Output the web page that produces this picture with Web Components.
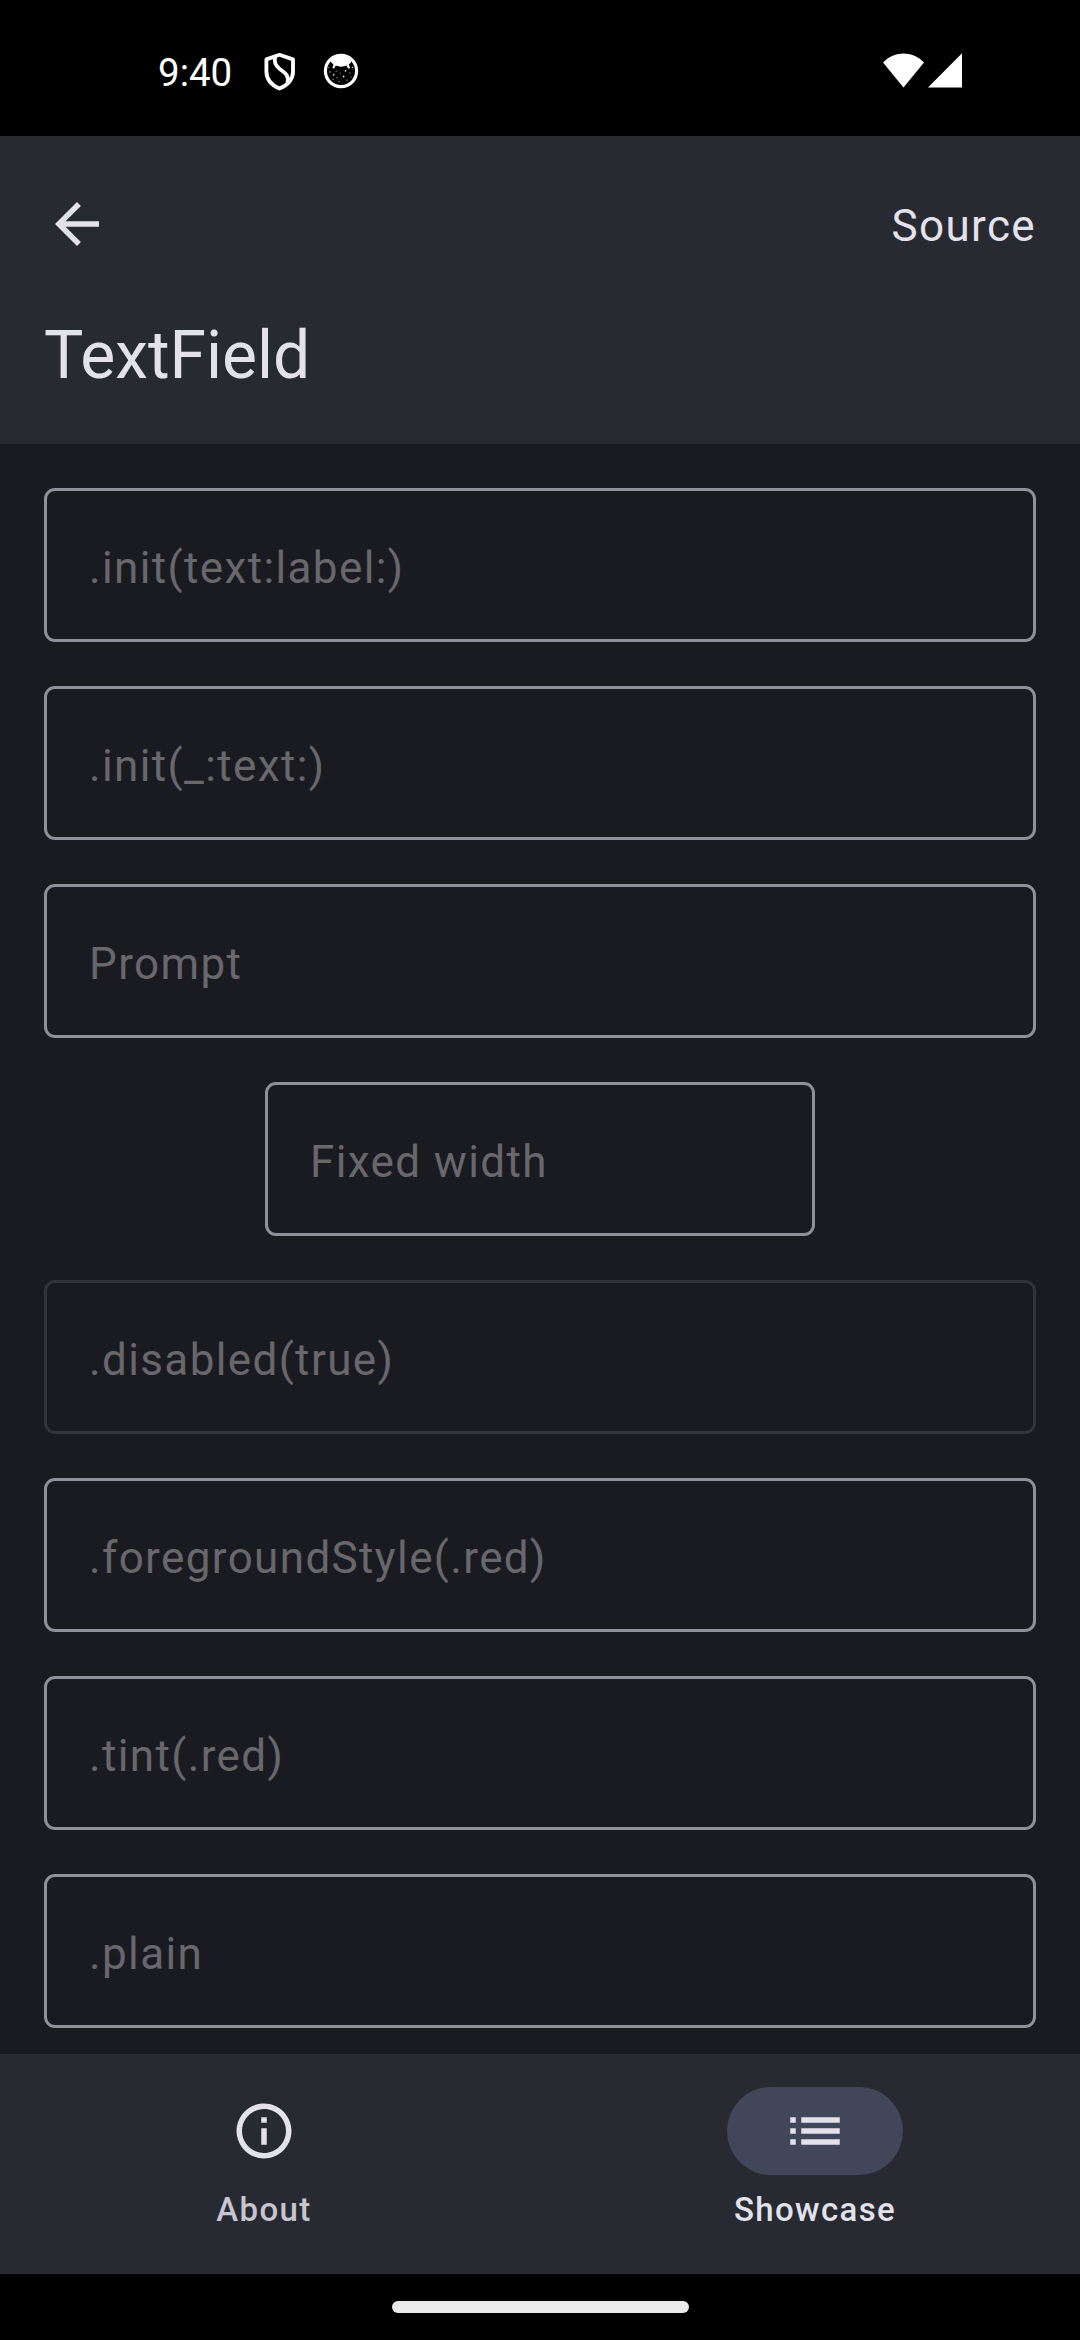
<!DOCTYPE html>
<html lang="en">
<head>
<meta charset="utf-8">
<title>TextField</title>
<style>
html,body{margin:0;padding:0;background:#000}
body{font-family:Roboto,"Noto Sans",sans-serif;width:1080px;height:2340px;overflow:hidden}
</style>
</head>
<body>
<app-screen>
  <status-bar slot="status">9:40</status-bar>
  <top-bar slot="header" action="Source">TextField</top-bar>
  <text-field>.init(text:label:)</text-field>
  <text-field>.init(_:text:)</text-field>
  <text-field>Prompt</text-field>
  <text-field fixed>Fixed width</text-field>
  <text-field disabled>.disabled(true)</text-field>
  <text-field>.foregroundStyle(.red)</text-field>
  <text-field>.tint(.red)</text-field>
  <text-field>.plain</text-field>
  <nav-bar slot="footer">
    <nav-item icon="info">About</nav-item>
    <nav-item icon="list" selected>Showcase</nav-item>
  </nav-bar>
  <home-indicator slot="footer"></home-indicator>
</app-screen>
<script>
const define = (name, html) => customElements.define(name, class extends HTMLElement {
  constructor() {
    super();
    const root = this.attachShadow({ mode: 'open' });
    root.innerHTML = typeof html === 'function' ? html(this) : html;
  }
});

define('app-screen', `
<style>
:host{display:flex;flex-direction:column;width:1080px;height:2340px;background:#1a1b20;overflow:hidden}
main{flex:1;min-height:0;box-sizing:border-box;padding:44px 44px 0;display:flex;flex-direction:column;align-items:center;gap:44px;overflow:hidden}
</style>
<slot name="status"></slot>
<slot name="header"></slot>
<main><slot></slot></main>
<slot name="footer"></slot>`);

define('status-bar', `
<style>
:host{display:flex;box-sizing:border-box;height:136px;flex:none;background:#000;color:#fff;padding:48px 118px 0 158px;align-items:flex-start;font-size:38.5px;line-height:48px}
span{padding-top:1px}
svg{display:block;flex:none}
.shield{margin:4px 0 0 32px}
.cat{margin:5px 0 0 27px}
.signal{margin:4px 0 0 auto}
</style>
<span><slot></slot></span>
<svg class="shield" width="32" height="40" viewBox="0 0 32 40" fill="none" stroke="#fff" stroke-width="3.8" stroke-linejoin="round">
  <path d="M15.5 2.8 29 7.4V19.5C29 27 24 33 15.5 36.6 7 33 2.4 27 2.4 19.5V7.4Z"/>
  <path d="M11.3 4.4C9.6 10 11.2 13.6 16 17.2 21.8 21.2 25 24 23.5 30.2"/>
</svg>
<svg class="cat" width="36" height="36" viewBox="0 0 36 36">
  <circle cx="18" cy="18" r="15.6" fill="none" stroke="#fff" stroke-width="3.2"/>
  <path fill="#fff" d="M8 6.5C14 1.8 22 1.8 28 6.5L28 9.4 25.8 11.5 27.2 15.2 25.2 15.4 23.4 12.6C20 14 16.2 14 12.8 12.6L11.2 15.4 9.4 15.2 10.5 11.6 8 9.3Z"/>
  <g fill="#ddd"><circle cx="5.8" cy="14.5" r=".5"/><circle cx="7" cy="19" r=".7"/><circle cx="10.6" cy="21.7" r=".9"/><circle cx="13.2" cy="18" r=".6"/><circle cx="14" cy="24.8" r=".5"/><circle cx="17.2" cy="20" r=".5"/><circle cx="16" cy="28.5" r=".5"/><circle cx="20.6" cy="23.5" r=".9"/><circle cx="22.5" cy="17.8" r=".9"/><circle cx="26.8" cy="20" r=".6"/><circle cx="24" cy="27" r=".6"/><circle cx="29.4" cy="14.4" r=".6"/><circle cx="28" cy="24" r=".5"/><circle cx="10" cy="26.3" r=".5"/></g>
</svg>
<svg class="signal" width="79" height="36" viewBox="0 0 79 36" fill="#fff">
  <path d="M0 10.6C11.5-1.5 29.5-1.5 41 10.6L20.5 35.5Z"/>
  <path d="M45 35.5H79V1.3Z"/>
</svg>`);

define('top-bar', el => `
<style>
:host{display:flex;flex-direction:column;flex:none;box-sizing:border-box;height:308px;background:#282a32;color:#e3e1e9;padding:55px 44px 0}
.row{display:flex;justify-content:space-between;height:66px;align-items:center}
svg{display:block}
.action{font-size:44px;letter-spacing:1.375px;line-height:66px;padding-top:4px}
h1{margin:55px 0 0;font-weight:400;font-size:66px;line-height:88px}
</style>
<div class="row">
  <svg width="66" height="66" viewBox="0 0 24 24" fill="currentColor"><path d="M20 11H7.83l5.59-5.59L12 4l-8 8 8 8 1.41-1.41L7.83 13H20v-2z"/></svg>
  <span class="action">${el.getAttribute('action')}</span>
</div>
<h1><slot></slot></h1>`);

define('text-field', `
<style>
:host{display:flex;flex:none;align-items:center;box-sizing:border-box;width:100%;height:154px;border:3px solid #90909a;border-radius:11px;padding:5px 41px 0 42px;font-size:44px;line-height:66px;letter-spacing:1.375px;color:#67676c;white-space:nowrap}
:host([fixed]){width:550px}
:host([disabled]){border-color:#333338}
</style>
<span><slot></slot></span>`);

define('nav-bar', `
<style>
:host{display:flex;flex:none;box-sizing:border-box;height:220px;padding-right:1px;gap:23px;background:#282a32}
</style>
<slot></slot>`);

const icons = {
  info: 'M11 7h2v2h-2zm0 4h2v6h-2zm1-9C6.48 2 2 6.48 2 12s4.48 10 10 10 10-4.48 10-10S17.52 2 12 2zm0 18c-4.41 0-8-3.59-8-8s3.59-8 8-8 8 3.59 8 8-3.59 8-8 8z',
  list: 'M3 13h2v-2H3zm0 4h2v-2H3zm0-8h2V7H3zm4 4h14v-2H7zm0 4h14v-2H7zM7 7v2h14V7z'
};
define('nav-item', el => `
<style>
:host{display:flex;flex:1;flex-direction:column;align-items:center;padding-top:33px;color:#c6c5d0}
:host([selected]){color:#e3e1e9}
.pill{display:flex;width:176px;height:88px;border-radius:44px;align-items:center;justify-content:center;color:#e3e1e9}
:host([selected]) .pill{background:#424659}
svg{display:block}
.label{margin-top:13px;font-size:33px;font-weight:500;line-height:44px;letter-spacing:1.375px}
</style>
<div class="pill"><svg width="66" height="66" viewBox="0 0 24 24" fill="currentColor"><path d="${icons[el.getAttribute('icon')]}"/></svg></div>
<span class="label"><slot></slot></span>`);

define('home-indicator', `
<style>
:host{display:flex;flex:none;height:66px;background:#000;align-items:center;justify-content:center}
div{width:297px;height:11.5px;border-radius:6px;background:#ebebeb}
</style>
<div></div>`);
</script>
</body>
</html>
